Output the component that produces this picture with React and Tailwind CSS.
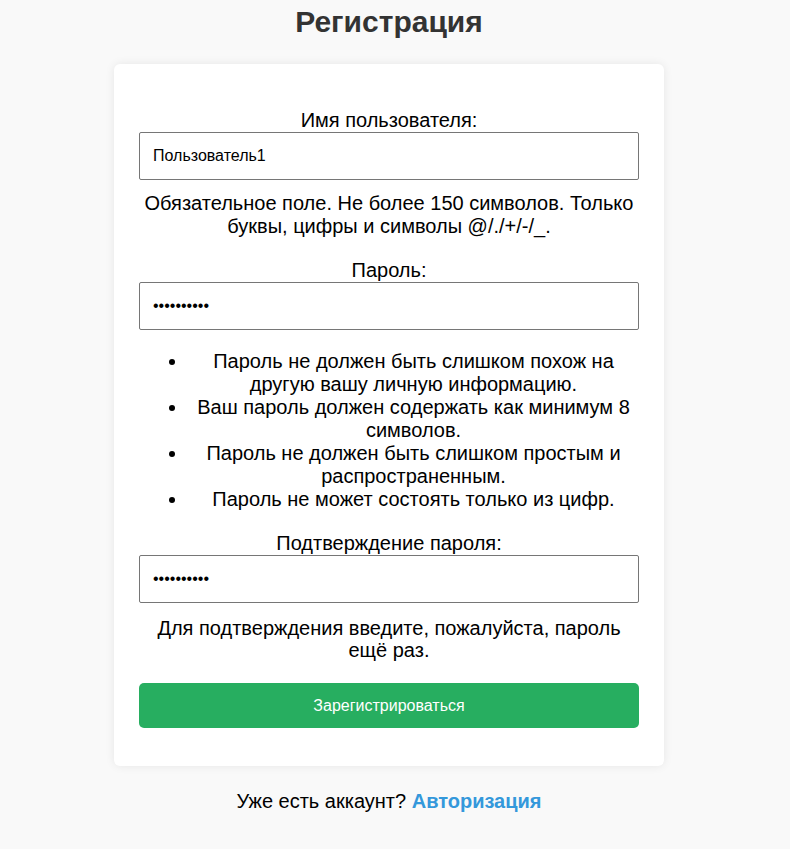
import React from 'react';

export default function App() {
  return (
    <div className="min-h-screen bg-[#f9f9f9] font-['Liberation_Sans',Arial,sans-serif] text-black">
      <div className="mr-[12px]">
        <h1 className="pt-[5px] text-center text-[30px] font-bold leading-[34px] text-[#333]">Регистрация</h1>

        <form className="mx-auto mt-[25px] w-[550px] rounded-md bg-white px-[25px] pt-[45px] pb-[38px] text-center text-[20px] leading-[23px] shadow-[0_0_10px_rgba(0,0,0,0.08)]">
          <label className="block">Имя пользователя:</label>
          <input
            type="text"
            defaultValue="Пользователь1"
            className="block h-[48px] w-full rounded-[2px] border border-[#767676] px-[13px] text-[16px] outline-none"
          />
          <p className="mt-[12px]">
            Обязательное поле. Не более 150 символов. Только буквы, цифры и символы @/./+/-/_.
          </p>

          <label className="mt-[21px] block">Пароль:</label>
          <input
            type="password"
            defaultValue="password12"
            className="block h-[48px] w-full rounded-[2px] border border-[#767676] px-[13px] text-[16px] outline-none"
          />
          <ul className="mt-[20px] list-disc pl-[49px]">
            <li>Пароль не должен быть слишком похож на другую вашу личную информацию.</li>
            <li>Ваш пароль должен содержать как минимум 8 символов.</li>
            <li>Пароль не должен быть слишком простым и распространенным.</li>
            <li>Пароль не может состоять только из цифр.</li>
          </ul>

          <label className="mt-[21px] block">Подтверждение пароля:</label>
          <input
            type="password"
            defaultValue="password12"
            className="block h-[48px] w-full rounded-[2px] border border-[#767676] px-[13px] text-[16px] outline-none"
          />
          <p className="mt-[14px] leading-[22px]">Для подтверждения введите, пожалуйста, пароль ещё раз.</p>

          <button
            type="button"
            className="mt-[22px] h-[45px] w-full rounded-[5px] bg-[#27ae60] text-[16px] text-white"
          >
            Зарегистрироваться
          </button>
        </form>

        <p className="mt-[24px] text-center text-[20px] leading-[23px]">
          Уже есть аккаунт? <a className="font-bold text-[#3498db]" href="#">Авторизация</a>
        </p>
      </div>
    </div>
  );
}
